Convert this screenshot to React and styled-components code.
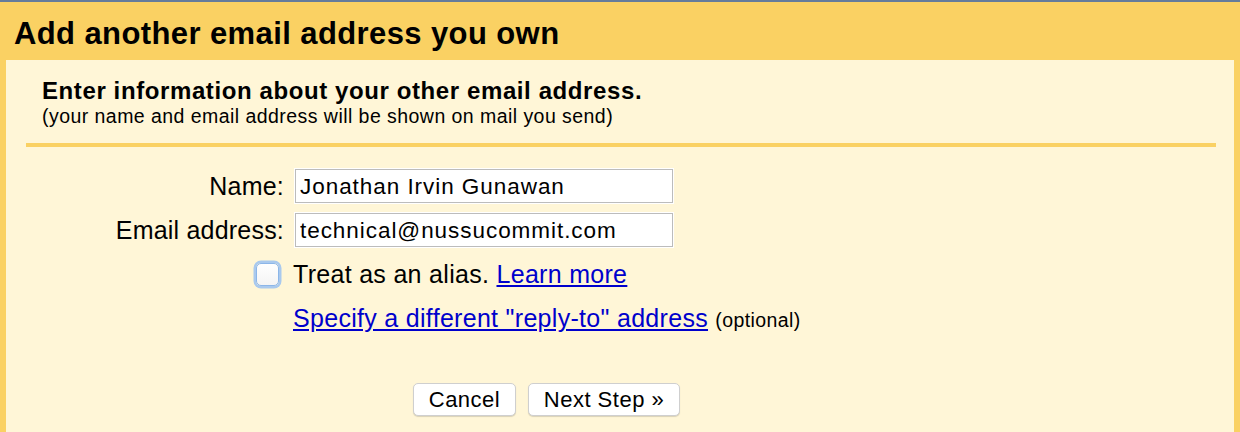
import React from 'react'
import styled, { createGlobalStyle } from 'styled-components'

const GlobalStyle = createGlobalStyle`
    html, body {
        margin: 0;
        padding: 0;
        background: #fad163;
        font-family: "Liberation Sans", Arial, Helvetica, sans-serif;
        color: #000;
    }
`

const Page = styled.div`
    display: flex;
    flex-direction: column;
    height: 100vh;
    box-sizing: border-box;
    overflow: hidden;
    border-top: 2px solid #657c9b;
    background: #fad163;
`

const Title = styled.h1`
    margin: 0;
    padding: 15px 14px 0 14px;
    height: 58px;
    flex: none;
    box-sizing: border-box;
    font-size: 31px;
    letter-spacing: 0.4px;
    line-height: 34px;
    font-weight: bold;
`

const Panel = styled.div`
    flex: 1;
    margin: 0 6px;
    background: #fff6d7;
    padding: 17px 18px 0 20px;
`

const Intro = styled.div`
    padding: 0 0 16px 16px;
    border-bottom: 4px solid #fad163;
`

const Heading = styled.h2`
    margin: 0;
    font-size: 24px;
    letter-spacing: 0.6px;
    line-height: 28px;
    font-weight: bold;
`

const Note = styled.p`
    margin: 0;
    font-size: 19.5px;
    letter-spacing: 0.45px;
    line-height: 22px;
`

const Form = styled.div`
    display: grid;
    grid-template-columns: 258px 378px;
    column-gap: 11px;
    row-gap: 10px;
    margin-top: 22px;
    align-items: center;
`

const Label = styled.label`
    text-align: right;
    font-size: 25px;
    letter-spacing: 0.2px;
    line-height: 34px;
`

const Input = styled.input`
    box-sizing: border-box;
    width: 378px;
    height: 34px;
    border: 1px solid #bcbcbc;
    box-shadow: 0 0 0 1px #fff;
    background: #fff;
    padding: 2px 4px 0;
    font-family: "Liberation Sans", Arial, sans-serif;
    font-size: 22.5px;
    letter-spacing: 0.95px;
    color: #000;
    outline: none;
`

const CheckCell = styled.div`
    display: flex;
    justify-content: flex-end;
    padding-right: 5px;
`

const Check = styled.span`
    display: block;
    width: 21px;
    height: 21px;
    border: 1.5px solid #8cb6e8;
    border-radius: 5px;
    background: linear-gradient(#fff, #f4f4f4);
    box-shadow: 0 0 0 2.5px #a9c9ee;
`

const Line = styled.div`
    font-size: 25px;
    letter-spacing: 0.3px;
    line-height: 34px;
    margin-left: -2px;
    white-space: nowrap;
`

const Link = styled.a`
    color: #0000cc;
    text-decoration: underline;
    cursor: pointer;
`

const Small = styled.span`
    font-size: 19.5px;
    letter-spacing: 0.4px;
`

const Buttons = styled.div`
    display: flex;
    gap: 12px;
    margin-top: 46px;
    padding-left: 387px;
`

const Button = styled.button`
    box-sizing: border-box;
    width: ${p => p.$w}px;
    height: 33px;
    background: #fff;
    border: 1px solid #cfcfcf;
    border-radius: 5px;
    box-shadow: 0 1px 1px rgba(0, 0, 0, 0.15);
    font-family: "Liberation Sans", Arial, sans-serif;
    font-size: 22px;
    letter-spacing: 0.5px;
    color: #000;
    padding: 0;
`

export default function App() {
    return (
        <>
            <GlobalStyle />
            <Page>
                <Title>Add another email address you own</Title>
                <Panel>
                    <Intro>
                        <Heading>Enter information about your other email address.</Heading>
                        <Note>(your name and email address will be shown on mail you send)</Note>
                    </Intro>
                    <Form>
                        <Label>Name:</Label>
                        <Input defaultValue="Jonathan Irvin Gunawan" />
                        <Label>Email address:</Label>
                        <Input defaultValue="technical@nussucommit.com" />
                        <CheckCell><Check /></CheckCell>
                        <Line>Treat as an alias. <Link>Learn more</Link></Line>
                        <span />
                        <Line><Link>Specify a different "reply-to" address</Link> <Small>(optional)</Small></Line>
                    </Form>
                    <Buttons>
                        <Button $w={103}>Cancel</Button>
                        <Button $w={152}>Next Step »</Button>
                    </Buttons>
                </Panel>
            </Page>
        </>
    )
}
